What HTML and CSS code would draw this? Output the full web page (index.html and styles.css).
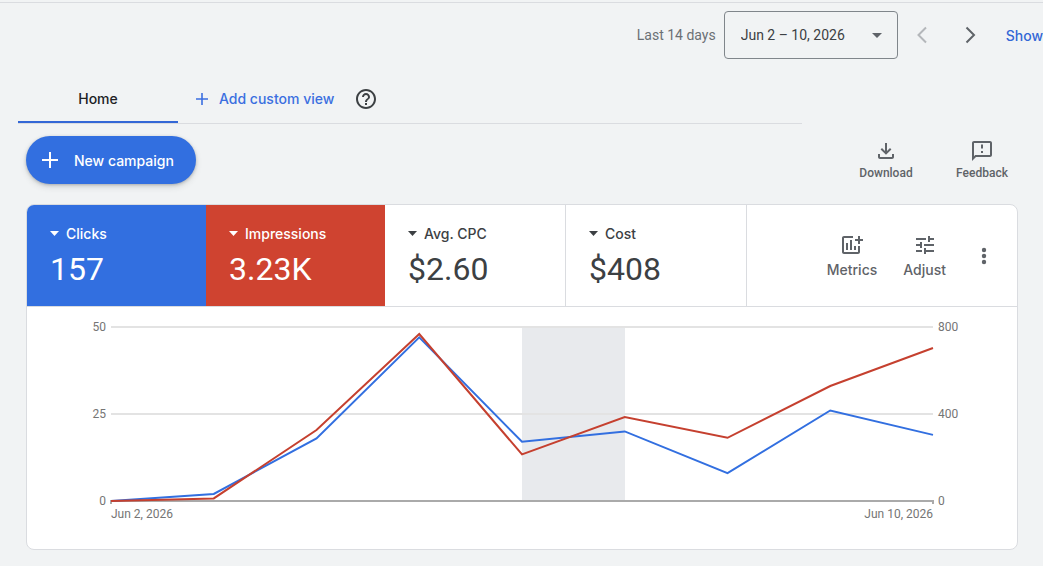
FILE: index.html
```html
<!DOCTYPE html>
<html lang="en">

<head>
	<meta charset="UTF-8">
	<meta name="viewport" content="width=device-width, initial-scale=1">
	<title>Campaign overview</title>
	<link rel="stylesheet" href="styles.css">
</head>

<body>
	<header class="date-bar">
		<label class="date-label" for="date-range">Last 14 days</label>
		<div class="date-picker">
			<select id="date-range" class="date-select">
				<option>Jun 2 – 10, 2026</option>
			</select>
			<svg class="date-arrow" viewBox="0 0 10 5"><path d="M0 0h10L5 5z"/></svg>
		</div>
		<button class="step-button" aria-label="Previous period" disabled>
			<svg class="icon" viewBox="0 0 24 24"><path d="M16 4.500l-7.500 7.500 7.500 7.500" class="chevron"/></svg>
		</button>
		<button class="step-button" aria-label="Next period">
			<svg class="icon" viewBox="0 0 24 24"><path d="M8.500 4.500l7.500 7.500-7.500 7.500" class="chevron"/></svg>
		</button>
		<a href="#" class="show-link">Show</a>
	</header>

	<nav class="tabs">
		<a href="#" class="tab tab-active">Home</a>
		<button class="add-view">
			<svg class="small-plus" viewBox="0 0 12 12"><path d="M5.200 0h1.600v5.200H12v1.600H6.800V12H5.200V6.800H0V5.200h5.200z"/></svg>
			Add custom view
		</button>
		<button class="help-button" aria-label="Help">
			<svg class="icon" viewBox="0 0 24 24"><path d="M11 18h2v-2h-2v2zm1-16C6.480 2 2 6.480 2 12s4.480 10 10 10 10-4.480 10-10S17.520 2 12 2zm0 18c-4.410 0-8-3.590-8-8s3.590-8 8-8 8 3.590 8 8-3.590 8-8 8zm0-14c-2.210 0-4 1.790-4 4h2c0-1.100.900-2 2-2s2 .900 2 2c0 2-3 1.750-3 5h2c0-2.250 3-2.500 3-5 0-2.210-1.790-4-4-4z"/></svg>
		</button>
	</nav>

	<main>
		<div class="toolbar">
			<button class="new-campaign">
				<svg class="plus" viewBox="0 0 16 16"><path d="M7 0h2v7h7v2H9v7H7V9H0V7h7z"/></svg>
				New campaign
			</button>
			<div class="toolbar-actions">
				<button class="tool-button">
					<svg class="icon" viewBox="0 0 24 24"><path d="M11 4h2v8l3-3 1.400 1.400L12 15.800l-5.400-5.400L8 9l3 3zM4 15h2v3h12v-3h2v3c0 1.100-.900 2-2 2H6c-1.100 0-2-.900-2-2z"/></svg>
					Download
				</button>
				<button class="tool-button">
					<svg class="icon" viewBox="0 0 24 24"><path d="M20 2H4c-1.100 0-2 .900-2 2v18l4-4h14c1.100 0 2-.900 2-2V4c0-1.100-.900-2-2-2zm0 14H5.200L4 17.200V4h16v12zM11 5.500h2v4h-2zM11 12h2v2h-2z"/></svg>
					Feedback
				</button>
			</div>
		</div>

		<section class="card">
			<div class="metrics">
				<div class="metric metric-blue">
					<div class="metric-name">
						<svg class="metric-arrow" viewBox="0 0 9 5"><path d="M0 0h9L4.500 5z"/></svg>
						<select class="metric-select" aria-label="First metric"><option>Clicks</option></select>
					</div>
					<div class="metric-value">157</div>
				</div>
				<div class="metric metric-red">
					<div class="metric-name">
						<svg class="metric-arrow" viewBox="0 0 9 5"><path d="M0 0h9L4.500 5z"/></svg>
						<select class="metric-select" aria-label="Second metric"><option>Impressions</option></select>
					</div>
					<div class="metric-value">3.23K</div>
				</div>
				<div class="metric metric-plain">
					<div class="metric-name">
						<svg class="metric-arrow" viewBox="0 0 9 5"><path d="M0 0h9L4.500 5z"/></svg>
						<select class="metric-select" aria-label="Third metric"><option>Avg. CPC</option></select>
					</div>
					<div class="metric-value">$2.60</div>
				</div>
				<div class="metric metric-plain">
					<div class="metric-name">
						<svg class="metric-arrow" viewBox="0 0 9 5"><path d="M0 0h9L4.500 5z"/></svg>
						<select class="metric-select" aria-label="Fourth metric"><option>Cost</option></select>
					</div>
					<div class="metric-value">$408</div>
				</div>
				<div class="card-actions">
					<button class="card-button">
						<svg class="icon" viewBox="0 0 24 24"><path d="M23 6v2h-3v3h-2V8h-3V6h3V3h2v3zM18 19H4V5h9V3H4c-1.100 0-2 .900-2 2v14c0 1.100.900 2 2 2h14c1.100 0 2-.900 2-2v-6h-2zM14 13h2v4h-2zM10 7h2v10h-2zM6 10h2v7H6z"/></svg>
						Metrics
					</button>
					<button class="card-button">
						<svg class="icon" viewBox="0 0 24 24"><path d="M3 17v2h6v-2H3zM3 5v2h10V5H3zm10 16v-2h8v-2h-8v-2h-2v6h2zM7 9v2H3v2h4v2h2V9H7zm14 4v-2H11v2h10zm-6-4h2V7h4V5h-4V3h-2v6z"/></svg>
						Adjust
					</button>
					<button class="more-button" aria-label="More">
						<svg class="icon" viewBox="0 0 24 24"><circle cx="12" cy="6" r="2.200"/><circle cx="12" cy="12" r="2.200"/><circle cx="12" cy="18" r="2.200"/></svg>
					</button>
				</div>
			</div>

			<div class="chart">
				<div class="axis axis-left"><span>50</span><span>25</span><span>0</span></div>
				<svg class="plot" viewBox="0 0 822 174" preserveAspectRatio="none">
					<rect x="411" y="0" width="103" height="174" class="weekend"/>
					<path d="M0 0H822M0 87H822" class="grid-line"/>
					<path d="M0 177V174H822V177" class="base-line"/>
					<polyline class="line line-blue" points="0,174 102.75,167 205.5,111.4 308.25,10.4 411,114.8 513.75,104.4 616.5,146.2 719.25,83.5 822,107.9"/>
					<polyline class="line line-red" points="0,174 102.75,171.4 205.5,103 308.25,7 411,127.4 513.75,90 616.5,110.8 719.25,59 822,21"/>
				</svg>
				<div class="axis axis-right"><span>800</span><span>400</span><span>0</span></div>
				<div class="dates"><span>Jun 2, 2026</span><span>Jun 10, 2026</span></div>
			</div>
		</section>
	</main>
</body>

</html>
```
FILE: styles.css
```css
* {
	box-sizing: border-box;
}

body {
	margin: 0;
	padding-top: 2px;
	background-color: #f1f3f4;
	color: #3c4043;
	font-family: Roboto, Arial, sans-serif;
	font-size: 14px;
}

button,
select {
	padding: 0;
	border: none;
	background: none;
	color: inherit;
	font: inherit;
	cursor: pointer;
	appearance: none;
}

a {
	text-decoration: none;
}

svg {
	display: block;
	flex: none;
	fill: currentColor;
}

.icon {
	width: 24px;
	height: 24px;
}

/* date range */

.date-bar {
	display: flex;
	align-items: center;
	justify-content: flex-end;
	padding: 8px 0 17px;
	border-top: 1px solid #dadce0;
}

.date-label {
	margin-right: 8px;
	color: #6b7075;
}

.date-picker {
	display: flex;
	align-items: center;
	position: relative;
}

.date-select {
	width: 174px;
	height: 48px;
	padding: 0 16px;
	border: 1px solid #80868b;
	border-radius: 4px;
}

.date-arrow {
	position: absolute;
	right: 16px;
	width: 10px;
	height: 5px;
	color: #5f6368;
	pointer-events: none;
}

.step-button {
	display: flex;
	justify-content: center;
	width: 48px;
	color: #5f6368;
}

.step-button:disabled {
	color: #b4b7ba;
}

.chevron {
	fill: none;
	stroke: currentColor;
	stroke-width: 2;
}

.show-link {
	margin-left: 12px;
	color: #3367d6;
	font-family: "Google Sans", Inter, sans-serif;
	font-weight: 500;
}

/* tabs */

.tabs {
	display: flex;
	align-items: center;
	height: 48px;
	margin: 0 241px 0 18px;
	border-bottom: 1px solid #dadce0;
	font-family: "Google Sans", Inter, sans-serif;
	font-weight: 500;
}

.tab {
	width: 160px;
	height: 47px;
	line-height: 46px;
	text-align: center;
	color: #202124;
}

.tab-active {
	border-bottom: 2px solid #3367d6;
}

.add-view {
	display: flex;
	align-items: center;
	gap: 11px;
	margin-left: 18px;
	padding-bottom: 2px;
	color: #3b6fe0;
}

.small-plus {
	width: 12px;
	height: 12px;
}

.help-button {
	margin-left: 20px;
	padding-bottom: 2px;
}

/* toolbar */

.toolbar {
	display: flex;
	align-items: center;
	justify-content: space-between;
	padding: 12px 33px 20px 26px;
}

.new-campaign {
	display: flex;
	align-items: center;
	gap: 16px;
	height: 48px;
	padding: 0 22px 0 16px;
	border-radius: 24px;
	background-color: #326fe0;
	box-shadow: 0 1px 3px rgba(60, 64, 67, .3), 0 3px 6px rgba(60, 64, 67, .15);
	color: white;
	font-family: "Google Sans", Inter, sans-serif;
	font-weight: 500;
}

.plus {
	width: 16px;
	height: 16px;
}

.toolbar-actions {
	display: flex;
	gap: 40px;
}

.tool-button {
	display: flex;
	flex-direction: column;
	align-items: center;
	gap: 2px;
	min-width: 56px;
	color: #5f6368;
	font-size: 12px;
	font-weight: 500;
	line-height: 16px;
}

/* scorecard */

.card {
	margin: 0 25px 16px 26px;
	border: 1px solid #dadce0;
	border-radius: 8px;
	background-color: white;
	overflow: hidden;
}

.metrics {
	display: flex;
	border-bottom: 1px solid #dadce0;
}

.metric {
	width: 179px;
	height: 101px;
	padding: 18px 23px;
}

.metric-blue {
	background-color: #326fe0;
	color: white;
}

.metric-red {
	background-color: #cf4330;
	color: white;
}

.metric-plain {
	width: 181px;
	border-right: 1px solid #dadce0;
}

.metric-name {
	display: flex;
	align-items: center;
	gap: 7px;
	height: 20px;
	font-family: "Google Sans", Inter, sans-serif;
	font-weight: 500;
}

.metric-arrow {
	width: 9px;
	height: 5px;
}

.metric-value {
	margin-top: 6px;
	font-size: 32px;
	line-height: 40px;
}

.card-actions {
	display: flex;
	align-items: center;
	gap: 26px;
	margin-left: auto;
	padding-right: 21px;
	color: #5f6368;
}

.card-button {
	display: flex;
	flex-direction: column;
	align-items: center;
	gap: 5px;
	font-family: "Google Sans", Inter, sans-serif;
	font-weight: 500;
	line-height: 16px;
}

/* chart */

.chart {
	display: grid;
	grid-template-columns: 79px 1fr 79px;
	column-gap: 5px;
	padding: 20px 0 27px;
	color: #757575;
	font-size: 12px;
	line-height: 16px;
}

.axis {
	display: flex;
	flex-direction: column;
	justify-content: space-between;
	margin: -8px 0;
}

.axis-left {
	text-align: right;
}

.plot {
	width: 100%;
	height: 174px;
	overflow: visible;
}

.plot path,
.plot polyline {
	fill: none;
	stroke-width: 2;
	vector-effect: non-scaling-stroke;
}

.weekend {
	fill: #e8eaed;
}

.plot .grid-line {
	stroke: #e3e3e3;
}

.plot .base-line {
	stroke: #aaa;
}

.line-blue {
	stroke: #326fe0;
}

.line-red {
	stroke: #c5402f;
}

.dates {
	display: flex;
	grid-column: 2;
	justify-content: space-between;
	padding-top: 5px;
}
```
